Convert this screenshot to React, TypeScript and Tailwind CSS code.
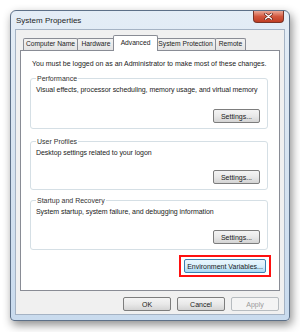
import React from "react";

const font = { fontFamily: '"Liberation Sans", Arial, sans-serif' };

function Btn({ label, w, variant = "normal" }: { label: string; w: string; variant?: "normal" | "hot" | "disabled" }) {
  const base = "h-[14px] rounded-[2px] border flex items-center justify-center text-[7px] leading-none whitespace-nowrap";
  const cls =
    variant === "hot"
      ? "border-[#3c7fb1] bg-gradient-to-b from-[#eaf6fd] via-[#d9f0fc] to-[#a7d9f5] text-[#1a1a1a]"
      : variant === "disabled"
      ? "border-[#b7bcc0] bg-[#f4f4f4] text-[#9a9a9a]"
      : "border-[#7d7d7d] bg-gradient-to-b from-[#f4f4f4] via-[#e9e9e9] to-[#d4d4d4] text-[#1a1a1a]";
  return <div className={`${base} ${cls} ${w}`}>{label}</div>;
}

function Group({ title, text, mt, h }: { title: string; text: string; mt: string; h: string }) {
  return (
    <div className={`relative ${mt} ${h} mx-[9px] mr-[11px] border border-[#d5dfe5] rounded-[3px] flex flex-col justify-between pt-[6px] pb-[5px] pl-[5px] pr-[7px]`}>
      <span className="absolute -top-[5px] left-[5px] bg-white px-[1px] text-[7px] leading-[9px] text-[#333]">{title}</span>
      <div className="text-[7px] leading-[9px] text-[#222] whitespace-nowrap tracking-[-0.05px]">{text}</div>
      <div className="flex justify-end">
        <Btn label="Settings..." w="w-[47px]" />
      </div>
    </div>
  );
}

function Tab({ label, w, selected }: { label: string; w: string; selected?: boolean }) {
  if (selected) {
    return (
      <div className={`relative z-10 -mx-[2px] h-[16px] -mb-px ${w} border border-b-0 border-[#898c95] bg-white rounded-t-[2px] flex items-start justify-center pt-[3px] text-[6.7px] leading-[8px] text-[#222] whitespace-nowrap`}>
        {label}
      </div>
    );
  }
  return (
    <div className={`h-[12px] ${w} border border-b-0 border-[#898c95] bg-gradient-to-b from-[#f3f3f3] to-[#e3e3e3] rounded-t-[2px] flex items-center justify-center text-[6.7px] leading-none text-[#222] -ml-px first:ml-0 whitespace-nowrap`}>
      {label}
    </div>
  );
}

export default function App() {
  return (
    <div className="w-[300px] h-[332px] bg-white pt-[10px] pl-[10px]" style={font}>
      <div className="w-[280px] h-[311px] rounded-t-[6px] rounded-b-[4px] border border-[#5d7088] bg-gradient-to-b from-[#e4edf6] via-[#d6e3f0] to-[#c9dbee] shadow-[2px_4px_10px_rgba(0,0,0,0.45)] flex flex-col">
        <div className="h-[18px] flex items-start justify-between relative">
          <span className="pl-[5px] pt-[5px] text-[8px] leading-[10px] text-[#1e1e1e]">System Properties</span>
          <div className="mr-[5px] w-[31px] h-[12px] rounded-b-[4px] border border-t-0 border-[#7a3326] bg-gradient-to-b from-[#e9a897] via-[#d2573e] to-[#c03d22] flex items-center justify-center">
            <svg width="9" height="7" viewBox="0 0 9 7">
              <path d="M1.5 1 L7.5 6 M7.5 1 L1.5 6" stroke="#5a1a10" strokeWidth="2.6" strokeLinecap="round" />
              <path d="M1.5 1 L7.5 6 M7.5 1 L1.5 6" stroke="#ffffff" strokeWidth="1.4" strokeLinecap="round" />
            </svg>
          </div>
        </div>
        <div className="mx-[4px] mb-[5px] flex-1 border border-[#a5b3c4] bg-[#f0f0f0] flex flex-col px-[4px] pt-[8px]">
          <div className="flex items-end pl-[3px] h-[12px]">
            <Tab label="Computer Name" w="w-[55px]" />
            <Tab label="Hardware" w="w-[38px]" />
            <Tab label="Advanced" w="w-[45px]" selected />
            <Tab label="System Protection" w="w-[61px]" />
            <Tab label="Remote" w="w-[31px]" />
          </div>
          <div className="w-[260px] h-[241px] border border-[#898c95] bg-white flex flex-col">
            <div className="pt-[8px] pl-[11px] text-[7px] leading-[9px] text-[#222] whitespace-nowrap">
              You must be logged on as an Administrator to make most of these changes.
            </div>
            <Group title="Performance" text="Visual effects, processor scheduling, memory usage, and virtual memory" mt="mt-[10px]" h="h-[51px]" />
            <Group title="User Profiles" text="Desktop settings related to your logon" mt="mt-[12px]" h="h-[49px]" />
            <Group title="Startup and Recovery" text="System startup, system failure, and debugging information" mt="mt-[10px]" h="h-[50px]" />
            <div className="flex justify-end mt-[5px] mr-[8px]">
              <div className="border-2 border-[#ff1010] p-[2px] px-[3px]">
                <Btn label="Environment Variables..." w="w-[82px]" variant="hot" />
              </div>
            </div>
          </div>
          <div className="flex justify-end gap-[6px] mt-[6px] mr-[1px]">
            <Btn label="OK" w="w-[48px]" />
            <Btn label="Cancel" w="w-[48px]" />
            <Btn label="Apply" w="w-[48px]" variant="disabled" />
          </div>
        </div>
      </div>
    </div>
  );
}
